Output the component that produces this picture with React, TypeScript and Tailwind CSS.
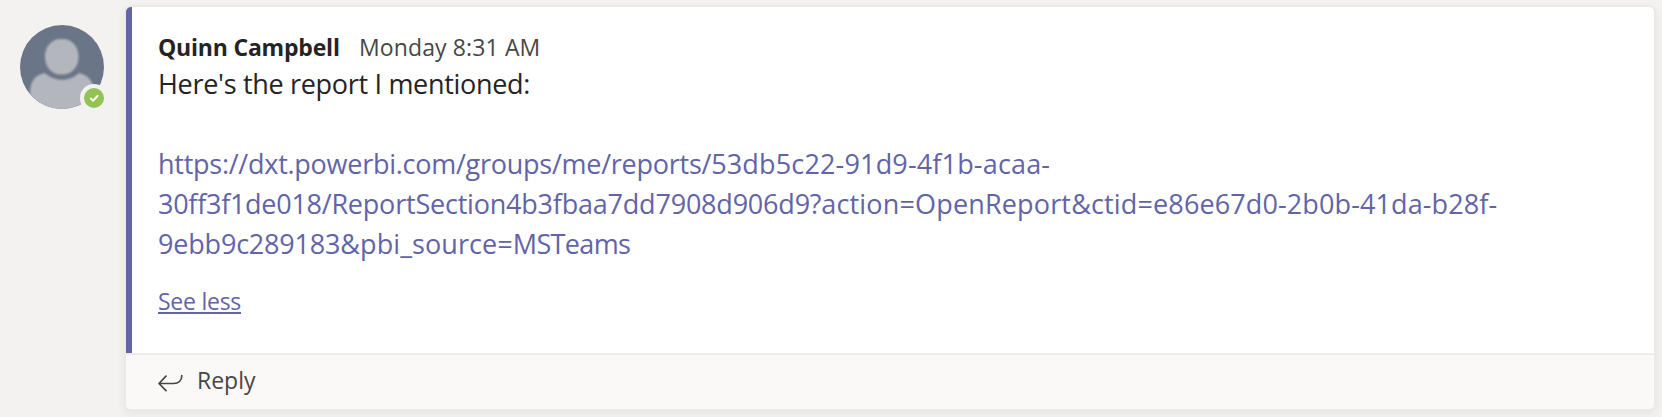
function Avatar() {
  return (
    <div className="relative ml-5 mt-[25px] h-[84px] w-[84px] shrink-0">
      <svg viewBox="0 0 84 84" className="block h-[84px] w-[84px]" aria-hidden="true">
        <defs>
          <clipPath id="disc">
            <circle cx="42" cy="42" r="42" />
          </clipPath>
          <filter id="soft" x="-10%" y="-10%" width="120%" height="120%" colorInterpolationFilters="sRGB">
            <feGaussianBlur stdDeviation="0.8" />
          </filter>
        </defs>
        <circle cx="42" cy="42" r="42" fill="#6a7588" />
        <g clipPath="url(#disc)">
          <g filter="url(#soft)" fill="#b3b7bd">
            <path d="M10 92V68c0-12 5-18 15-20 9 9 25 9 34 0 9 2 15 8 15 20v24z" />
            <rect x="25" y="14" width="33.500" height="35.500" rx="15.500" ry="17" />
          </g>
        </g>
      </svg>
      <span className="absolute left-[60px] top-[59px] flex h-7 w-7 items-center justify-center rounded-full bg-[#f3f2f1]">
        <span className="flex h-5 w-5 items-center justify-center rounded-full bg-[#92c353]">
          <svg viewBox="0 0 20 20" className="h-5 w-5" fill="none" stroke="#fff" strokeWidth="2" strokeLinecap="round" strokeLinejoin="round" aria-hidden="true">
            <path d="M6.900 10.600l2.200 2.200 4.500-4.900" />
          </svg>
        </span>
      </span>
    </div>
  );
}

const linkLines = [
  [
    { text: "https://dxt.powerbi.com/groups/me/reports/", spacing: "tracking-[-0.26px]" },
    { text: "53db5c22-91d9-4f1b-acaa-", spacing: "tracking-[0.16px]" },
  ],
  [
    { text: "30ff3f1de018/", spacing: "tracking-[-0.27px]" },
    { text: "ReportSection4b3fbaa7dd7908d906d9?", spacing: "tracking-[-0.21px]" },
    { text: "action=OpenReport&ctid=", spacing: "tracking-[0.16px]" },
    { text: "e86e67d0-2b0b-41da-b28f-", spacing: "tracking-[0.11px]" },
  ],
  [
    { text: "9ebb9c289183", spacing: "tracking-[-0.19px]" },
    { text: "&pbi_source=", spacing: "tracking-[0.07px]" },
    { text: "MSTeams", spacing: "tracking-[-0.65px]" },
  ],
];

export default function App() {
  return (
    <div className="flex h-[417px] w-full overflow-hidden bg-[#f3f2f1] font-['Open_Sans','Noto_Sans',sans-serif] text-[#252423]">
      <Avatar />
      <article className="ml-[22px] mr-2 mt-[7px] flex h-[402px] flex-1 flex-col overflow-hidden rounded-[5px] bg-white shadow-[0_0_0_2px_#ebeae9,0_3px_8px_2px_rgba(0,0,0,0.06)]">
        <div className="flex h-[346px] flex-col items-start border-l-[6px] border-[#6264a7] pl-[26px] pt-6">
          <header className="flex h-8 items-center whitespace-nowrap text-[23px] leading-8">
            <span className="w-[201px] font-bold tracking-[-0.2px]">Quinn Campbell</span>
            <time className="tracking-[0.12px] text-[#484644]">Monday 8:31 AM</time>
          </header>
          <p className="mt-px whitespace-nowrap text-[27px] leading-10 tracking-[-0.31px]">Here's the report I mentioned:</p>
          <a href="#report" className="mt-10 block whitespace-nowrap text-[27px] leading-10 text-[#6264a7]">
            {linkLines.map((parts) => (
              <span key={parts[0].text} className="block">
                {parts.map((part) => (
                  <span key={part.text} className={part.spacing}>{part.text}</span>
                ))}
              </span>
            ))}
          </a>
          <button className="mt-[21px] h-[29px] whitespace-nowrap border-b-2 border-[#6264a7] text-[23px] leading-8 tracking-[-0.25px] text-[#6264a7]">See less</button>
        </div>
        <button className="flex flex-1 items-start border-t-2 border-[#edebe9] bg-[#faf9f8] pl-8 pt-[9px] text-[#484644]">
          <svg viewBox="0 0 26 20" className="mt-[9px] h-5 w-[26px]" fill="none" stroke="currentColor" strokeWidth="1.700" strokeLinecap="round" strokeLinejoin="round" aria-hidden="true">
            <path d="M8 3.200L1 10.500l7 7.200M1 10.500h14.500c5 0 8.300-3 8.300-8" />
          </svg>
          <span className="ml-[13px] text-[23px] leading-8">Reply</span>
        </button>
      </article>
    </div>
  );
}
